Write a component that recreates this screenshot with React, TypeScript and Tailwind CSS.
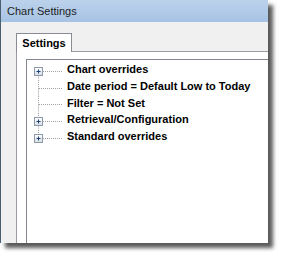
const items = [
  { label: "Chart overrides", expandable: true },
  { label: "Date period = Default Low to Today", expandable: false },
  { label: "Filter = Not Set", expandable: false },
  { label: "Retrieval/Configuration", expandable: true },
  { label: "Standard overrides", expandable: true },
];

const TreeLines = ({ first, last, expandable }: { first: boolean; last: boolean; expandable: boolean }) => (
  <svg width="40" height="16.67" viewBox="0 0 40 16.67" className="shrink-0">
    {!first && <line x1="11.5" y1="0" x2="11.5" y2="8.5" stroke="#a0a0a0" strokeDasharray="1 1" />}
    {!last && <line x1="11.5" y1="8.5" x2="11.5" y2="16.67" stroke="#a0a0a0" strokeDasharray="1 1" />}
    <line x1="12" y1="8.5" x2="36" y2="8.5" stroke="#a0a0a0" strokeDasharray="1 1" />
    {expandable && (
      <g>
        <defs>
          <linearGradient id="pb" x1="0" y1="0" x2="0" y2="1">
            <stop offset="0" stopColor="#ffffff" />
            <stop offset="1" stopColor="#d8dde6" />
          </linearGradient>
        </defs>
        <rect x="7.5" y="4.5" width="8" height="8" fill="url(#pb)" stroke="#8d9aab" />
        <line x1="9.5" y1="8.5" x2="13.5" y2="8.5" stroke="#1c3f74" />
        <line x1="11.5" y1="6.5" x2="11.5" y2="10.5" stroke="#1c3f74" />
      </g>
    )}
  </svg>
);

export default function App() {
  return (
    <div className="w-[282px] h-[258px] bg-white">
      <div className="w-[268px] h-[243px] overflow-hidden flex flex-col border-l border-[#4d5d70] shadow-[5px_5px_4px_rgba(0,0,0,0.65)] font-['Liberation_Sans',sans-serif]">
        <div className="h-[22px] shrink-0 bg-gradient-to-b from-[#bcd2eb] to-[#a7c3e4] pl-[6px] pt-px flex items-center text-[11px] text-[#1e1e1e]">
          Chart Settings
        </div>
        <div className="flex-1 bg-[#f0f0f0] pl-[15px] pt-[11px] flex flex-col">
          <div className="flex">
            <div className="relative z-10 -mb-px h-[19px] w-[56px] border border-b-0 border-[#898c95] bg-white font-bold text-[11px] text-black flex items-center justify-center">
              Settings
            </div>
          </div>
          <div className="flex-1 border-l border-t border-[#9a9ca3] bg-white pl-[9px] pt-[7px] flex">
            <div className="flex-1 border-l border-t border-[#828790] pt-[3px] flex flex-col">
              {items.map((it, i) => (
                <div key={it.label} className="h-[16.67px] flex items-center">
                  <TreeLines first={i === 0} last={i === items.length - 1} expandable={it.expandable} />
                  <span className="pb-[3px] text-[11px] font-bold text-black whitespace-nowrap leading-none">{it.label}</span>
                </div>
              ))}
            </div>
          </div>
        </div>
      </div>
    </div>
  );
}
